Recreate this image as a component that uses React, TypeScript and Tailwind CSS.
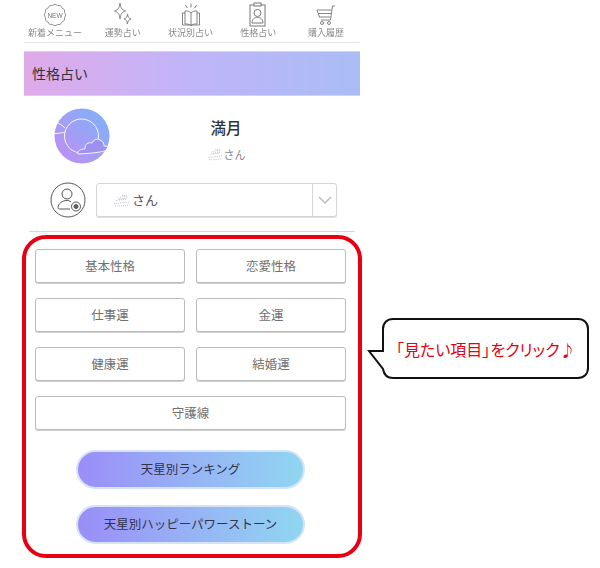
const font = { fontFamily: '"Noto Sans CJK JP", "Liberation Sans", sans-serif' }

// 新着アイコンのギザギザ円
const scallop = Array.from({ length: 24 }, (_, i) => {
	const r = i % 2 === 0 ? 10.8 : 9.9
	const a = (i / 24) * Math.PI * 2
	return `${(12 + r * Math.cos(a)).toFixed(2)},${(13 + r * Math.sin(a)).toFixed(2)}`
}).join(' ')

function NewIcon() {
	return (
		<svg width="24" height="26" viewBox="0 0 24 26" fill="none" stroke="#777" strokeWidth="0.8">
			<polygon points={scallop} strokeLinejoin="round" />
			<text x="12" y="15.500" textAnchor="middle" fontSize="6.500" fill="#777" stroke="none" fontFamily="Liberation Sans">NEW</text>
		</svg>
	)
}

function SparkleIcon() {
	return (
		<svg width="24" height="26" viewBox="0 0 24 26" fill="none" stroke="#777" strokeWidth="0.9">
			<path d="M9 1c.6 5 1.600 6.400 5.500 8-3.900 1.400-4.900 3-5.500 8-.6-5-1.600-6.600-5.500-8C7.400 7.400 8.400 6 9 1z" />
			<path d="M16.500 12c.4 3.200 1 4.100 3.500 5-2.500.9-3.100 1.800-3.500 5-.4-3.200-1-4.100-3.500-5 2.500-.9 3.100-1.800 3.500-5z" />
		</svg>
	)
}

function BookIcon() {
	return (
		<svg width="24" height="26" viewBox="0 0 24 26" fill="none" stroke="#777" strokeWidth="0.9">
			<path d="M12 11c-1.500-1.600-3.500-2.200-6-2v13c2.500-.2 4.500.4 6 1.500 1.500-1.100 3.500-1.700 6-1.500V9c-2.500-.2-4.500.4-6 2zM12 11v12.500" />
			<path d="M6 11H3.500v12H20.500V11H18" />
			<path d="M12 1.500v4M6.500 3l1.800 3M17.500 3l-1.800 3" />
		</svg>
	)
}

function BadgeIcon() {
	return (
		<svg width="20" height="26" viewBox="0 0 20 26" fill="none" stroke="#777" strokeWidth="1">
			<rect x="2" y="3" width="15" height="21" />
			<rect x="6" y="1" width="7" height="3" fill="#fff" />
			<circle cx="9.500" cy="11" r="3.500" />
			<path d="M4 21c0-4 2.500-5.500 5.500-5.500S15 17 15 21z" />
		</svg>
	)
}

function CartIcon() {
	return (
		<svg width="24" height="26" viewBox="0 0 24 26" fill="none" stroke="#777" strokeWidth="0.9">
			<path d="M21 4h-2.500l-2 14H7" />
			<path d="M3 8h14.500M4 11.500h13M5 15h11.500M3 8l2.500 7" />
			<circle cx="8" cy="21" r="1.500" />
			<circle cx="15" cy="21" r="1.500" />
		</svg>
	)
}

function Speckle({ w }: { w: number }) {
	return (
		<svg width={w} height="14" viewBox="0 0 18 14" fill="none" stroke="#b4b8c0" strokeWidth="0.9" strokeDasharray="1 1">
			<path d="M1 11c4-1 9-1 15-2M3 8c3-2 8-3 12-3M5 5c3-1 6-2 9-2M2 13c4 0 9 0 13-1M6 7l8-1M9 2l6 1" />
		</svg>
	)
}

function MoonAvatar() {
	return (
		<svg width="56" height="56" viewBox="0 0 56 56" fill="none">
			<defs>
				<linearGradient id="moon" x1="1" y1="0" x2="0" y2="1">
					<stop offset="0" stopColor="#7ab4fb" />
					<stop offset="1" stopColor="#c48cf0" />
				</linearGradient>
				<clipPath id="disc">
					<circle cx="28" cy="28" r="27.500" />
				</clipPath>
			</defs>
			<circle cx="28" cy="28" r="27.500" fill="url(#moon)" />
			<g clipPath="url(#disc)" stroke="#fff" strokeWidth="1" strokeOpacity="0.9">
				<circle cx="27.500" cy="28" r="17" />
				<path d="M1 14c4 1 7 3 10 6M0 25.500c4 0 8-.5 11-1.500" />
				<path d="M24 46c-1-3 2-5 7-5 0-5 3-7 7-6 1-3 5-5 8-3 3 1 4 4 4 6 3 0 5 1 6 2-4 4-14 5-32 6z" fill="#9c90f0" />
			</g>
		</svg>
	)
}

function UserAddIcon() {
	return (
		<svg width="36" height="36" viewBox="0 0 36 36" fill="none" stroke="#444" strokeWidth="0.9">
			<circle cx="18" cy="18" r="17" />
			<circle cx="17" cy="12" r="5" />
			<path d="M21 20c-1-1-2.500-1.500-4-1.500-5 0-8.500 3-9 7 0 1 .5 1.500 1.500 1.500H20" />
			<circle cx="26" cy="24.500" r="4.500" />
			<circle cx="26" cy="24.500" r="2" fill="#666" />
		</svg>
	)
}

const navItems = [
	{ label: '新着メニュー', icon: <NewIcon /> },
	{ label: '運勢占い', icon: <SparkleIcon /> },
	{ label: '状況別占い', icon: <BookIcon /> },
	{ label: '性格占い', icon: <BadgeIcon /> },
	{ label: '購入履歴', icon: <CartIcon /> },
]

function OutlineButton({ label, className }: { label: string; className?: string }) {
	return (
		<button
			type="button"
			className={`flex h-[34px] items-center justify-center rounded-[3px] border border-[#bcbcbc] bg-white text-[12.500px] text-[#707070] shadow-[0_1px_0_#d0d0d0] ${className ?? ''}`}
		>
			{label}
		</button>
	)
}

function GradientButton({ label }: { label: string }) {
	return (
		<button
			type="button"
			className="flex h-[39px] w-[229px] items-center justify-center rounded-full border-2 border-[#d6e2f8] bg-gradient-to-r from-[#9a8df8] to-[#8fd6f0] text-[12.500px] text-[#33334d]"
		>
			{label}
		</button>
	)
}

export default function App() {
	return (
		<div style={font} className="relative h-[568px] w-[600px] overflow-hidden bg-white">
			<div className="ml-[24px] w-[336px]">
				<nav className="flex h-[43px] items-start justify-between border-b border-[#e6e6e6] pr-[3px] pt-[2px] blur-[0.3px]">
					{navItems.map(item => (
						<div key={item.label} className="flex w-[62px] flex-col items-center">
							<div className="flex h-[26px] items-center">{item.icon}</div>
							<span className="whitespace-nowrap text-[9px] leading-[9px] text-[#8a8a8a]">{item.label}</span>
						</div>
					))}
				</nav>
				<h1 className="mt-[8px] flex h-[45px] items-center border-y border-[#c6d6f8] bg-gradient-to-r from-[#dfaaea] via-[#bfb5f8] to-[#a9bdf4] pl-[8px] text-[14px] text-[#333]">
					性格占い
				</h1>
				<section className="flex h-[72px] items-start pl-[30px] pt-[12px]">
					<MoonAvatar />
					<div className="ml-[12px] flex flex-1 flex-col items-center pr-[30px] pt-[8px]">
						<p className="text-[15.500px] font-medium leading-[22px] text-[#333]">満月</p>
						<p className="mt-[8px] flex items-center text-[11px] leading-[16px] text-[#888]">
							<Speckle w={17} />
							さん
						</p>
					</div>
				</section>
				<section className="mt-[14px] flex items-center pl-[26px] pr-[23px]">
					<UserAddIcon />
					<div className="ml-[10px] flex h-[34px] flex-1 items-center rounded-[3px] border border-[#d5d5d5] bg-white pl-[16px] text-[13px] text-[#555] shadow-[0_1px_0_#e0e0e0]">
						<Speckle w={18} />
						<span className="ml-[1px] flex-1">さん</span>
						<div className="flex h-full w-[24px] items-center justify-center border-l border-[#d5d5d5]">
							<svg width="14" height="8" viewBox="0 0 14 8" fill="none" stroke="#c0c0c0" strokeWidth="1.600">
								<path d="M1 1l6 6 6-6" />
							</svg>
						</div>
					</div>
				</section>
				<hr className="mx-[5px] mt-[13px] border-[#d5d5d5]" />
				<section className="-ml-[2px] mt-[3px] flex h-[323px] w-[340px] flex-col rounded-[24px] border-4 border-[#e60012] pl-[9px] pr-[12px] pt-[10px]">
					<div className="grid grid-cols-2 gap-x-[11px] gap-y-[15px]">
						<OutlineButton label="基本性格" />
						<OutlineButton label="恋愛性格" />
						<OutlineButton label="仕事運" />
						<OutlineButton label="金運" />
						<OutlineButton label="健康運" />
						<OutlineButton label="結婚運" />
						<OutlineButton label="守護線" className="col-span-2" />
					</div>
					<div className="mt-[20px] flex flex-col items-center gap-[16px]">
						<GradientButton label="天星別ランキング" />
						<GradientButton label="天星別ハッピーパワーストーン" />
					</div>
				</section>
			</div>
			{/* 吹き出し */}
			<div className="absolute left-[367px] top-[318px] flex h-[62px] w-[222px] items-center pl-[29px]">
				<svg className="absolute inset-0" width="222" height="62" viewBox="0 0 222 62" fill="none" stroke="#111" strokeWidth="2">
					<path d="M26 1h185c6 0 10 4 10 10v39c0 6-4 10-10 10H26c-6 0-9-3-10-9l-14-18h14V11c0-6 4-10 10-10z" fill="#fff" />
				</svg>
				<span className="relative whitespace-nowrap text-[16px] tracking-[0px] text-[#e60012] [font-feature-settings:'palt']">
					「見たい項目」をクリック♪
				</span>
			</div>
		</div>
	)
}
